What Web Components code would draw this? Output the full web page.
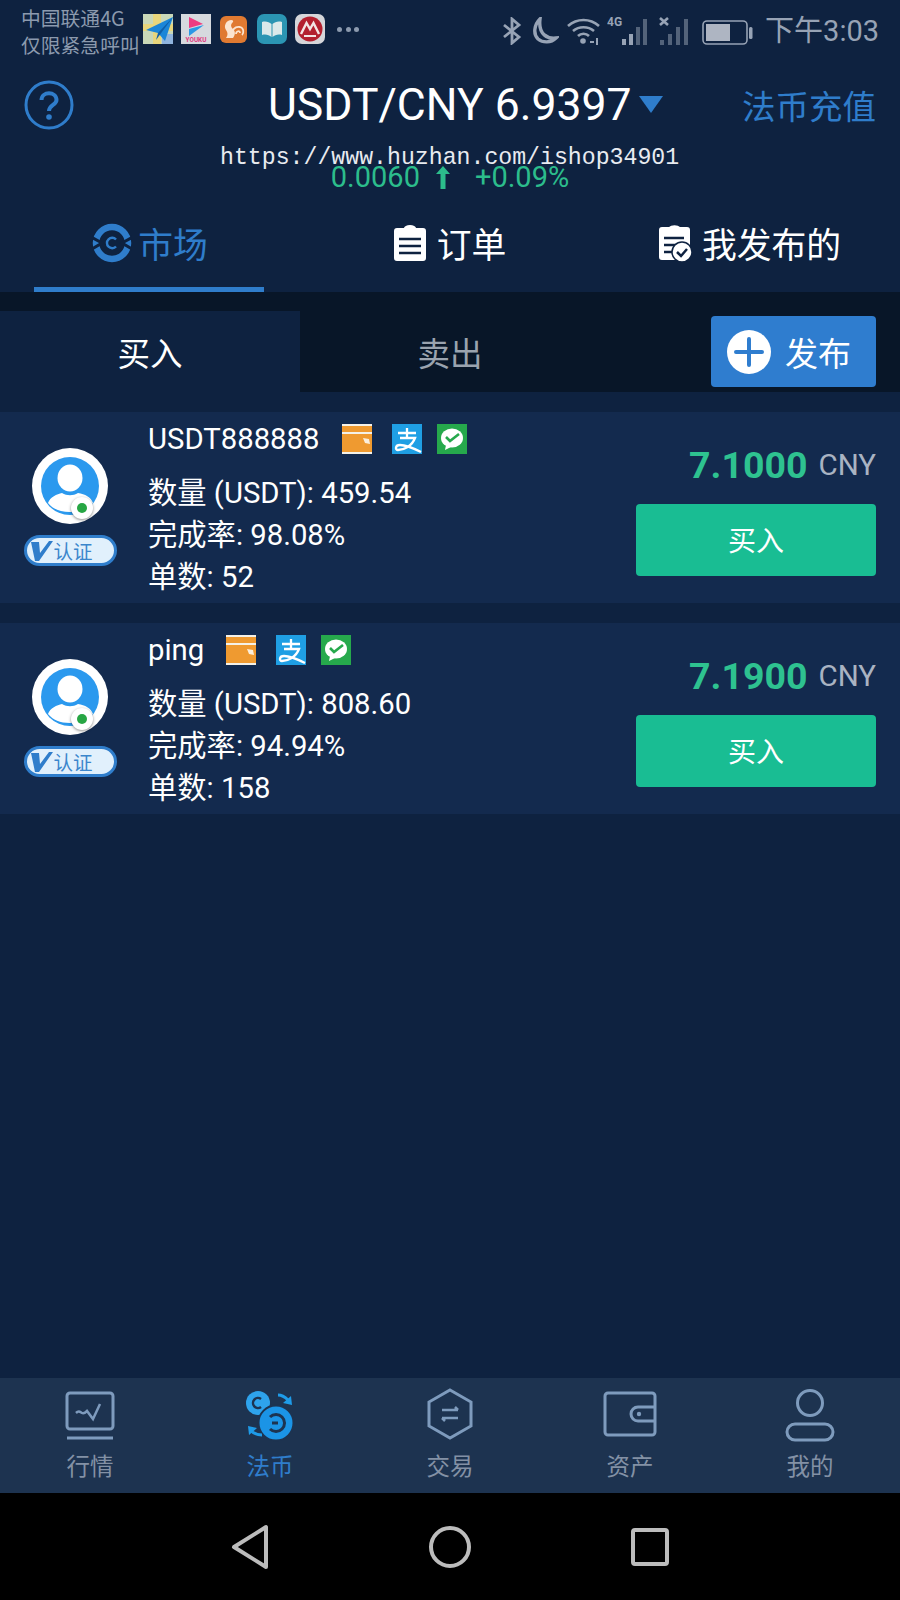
<!DOCTYPE html>
<html lang="zh">
<head>
<meta charset="utf-8">
<title>USDT/CNY</title>
<style>
  html, body { margin: 0; padding: 0; background: #0e2240; }
  body { font-family: Roboto, "Noto Sans CJK SC", sans-serif; }
</style>
</head>
<body>
<app-shell>
  <status-bar></status-bar>
  <rate-header></rate-header>
  <market-tabs></market-tabs>
  <side-switch></side-switch>
  <ad-list>
    <ad-card name="USDT888888" qty="459.54" rate="98.08%" count="52" price="7.1000"></ad-card>
    <ad-card name="ping" qty="808.60" rate="94.94%" count="158" price="7.1900"></ad-card>
  </ad-list>
  <bottom-nav></bottom-nav>
  <system-nav></system-nav>
</app-shell>

<script>
const FONT = 'Roboto, "Noto Sans CJK SC", sans-serif';
const CJK = '"Noto Sans CJK SC", Roboto, sans-serif';

// Contenidor de tota la pantalla
class AppShell extends HTMLElement {
  constructor() {
    super();
    this.attachShadow({ mode: 'open' });
  }
  connectedCallback() {
    this.shadowRoot.innerHTML = `
      <style>
        :host { display: flex; flex-direction: column; width: 900px; height: 1600px; background: #0e2240; color: #fff; font-family: ${FONT}; overflow: hidden; }
      </style>
      <slot></slot>`;
  }
}

// Barra d'estat del telefon
class StatusBar extends HTMLElement {
  constructor() {
    super();
    this.attachShadow({ mode: 'open' });
  }
  connectedCallback() {
    this.shadowRoot.innerHTML = `
      <style>
        :host { display: flex; align-items: flex-start; height: 55px; padding: 4px 21px 0; box-sizing: border-box; color: #8c9aae; font-family: ${CJK}; }
        .carrier { width: 122px; font-size: 19.800px; line-height: 27px; white-space: nowrap; }
        .apps { display: flex; align-items: center; margin-top: 10px; }
        .apps svg { display: block; width: 30px; height: 30px; margin-right: 8px; }
        .dots { display: flex; gap: 3.500px; margin-left: 4px; }
        .dots i { width: 5px; height: 5px; border-radius: 50%; background: #8c9aae; }
        .right { margin-left: auto; display: flex; align-items: center; margin-top: 12px; color: #97a3b5; }
        .right svg { display: block; }
        .time { font-size: 29px; line-height: 30px; margin-left: 11px; font-family: Roboto, "Noto Sans CJK SC", sans-serif; white-space: nowrap; }
      </style>
      <div class="carrier">中国联通4G<br>仅限紧急呼叫</div>
      <div class="apps">
        <svg viewBox="0 0 30 30"><rect width="30" height="30" fill="#c9d8b8"/><rect x="10" width="8" height="30" fill="#e8d67c"/><rect y="10" width="30" height="7" fill="#e8d67c"/><rect x="19" y="20" width="11" height="10" fill="#8fb4de"/><path d="M3 16 30 3 22 27 15 19Z" fill="#1b86d8"/><path d="M15 19 30 3 13 26Z" fill="#0f5fa8"/></svg>
        <svg viewBox="0 0 30 30"><rect width="30" height="30" fill="#d6d9de"/><path d="M8 3 22 10 8 14Z" fill="#ee3c82"/><path d="M23 11 8 15V22Z" fill="#2a98e6"/><text x="15" y="28" text-anchor="middle" font-size="6.4" font-weight="700" fill="#e0397f" font-family="Roboto, sans-serif">YOUKU</text></svg>
        <svg viewBox="0 0 30 30"><rect x="1" y="2" width="27" height="27" rx="6" fill="#e07a31"/><path d="M9 7c3-2 6-1 5 1-2 2-3 4 0 7 3 3 2 6 0 9H7c2-3 2-5 0-8-2-3-1-7 2-9Z" fill="#fbe4cf"/><path d="M14 22c-2-6 2-10 7-9 4 1 4 6 2 8M17 20c0-3 4-4 4-1" fill="none" stroke="#fbe4cf" stroke-width="1.800"/></svg>
        <svg viewBox="0 0 30 30"><rect width="30" height="30" rx="7" fill="#2b95b3"/><path d="M5 8c4-1 7 0 9.500 2v13C12 21 9 20 5 21Z" fill="#dbe9ea"/><path d="M25 8c-4-1-7 0-9.500 2v13c2.500-2 5.500-3 9.500-2Z" fill="#dbe9ea"/></svg>
        <svg viewBox="0 0 30 30" style="margin-right:8px"><rect width="30" height="30" rx="7" fill="#d5d6da"/><circle cx="15" cy="15" r="12.500" fill="#b3202f"/><path d="M6 20 11.500 9 15 15 18.500 9 24 20" fill="none" stroke="#f3e5e5" stroke-width="2.400"/><path d="M9 22H21" stroke="#f3e5e5" stroke-width="2"/></svg>
        <div class="dots"><i></i><i></i><i></i></div>
      </div>
      <div class="right">
        <svg width="20" height="28" viewBox="0 0 20 28" fill="none" stroke="currentColor" stroke-width="2.800"><path d="M2 8 17 20 10 26V2L17 8 2 20"/></svg>
        <svg width="30" height="28" viewBox="0 0 30 28" style="margin-left:7px" fill="none" stroke="currentColor" stroke-width="3.400"><path d="M11 2C5 8 4 17 9 22c5 4 13 4 18-1-8 1-18-3-16-19Z"/></svg>
        <svg width="34" height="28" viewBox="0 0 34 28" style="margin-left:8px" fill="none" stroke="currentColor" stroke-width="2.600"><path d="M1 9c9-8 22-8 31 0M6 14c6-5 15-5 21 0M11 19c3-3 8-3 11 0"/><circle cx="16" cy="24" r="2.800" fill="currentColor" stroke="none"/><path d="M23 25h4M30 21v7" stroke-width="2"/></svg>
        <svg width="44" height="30" viewBox="0 0 44 30" style="margin-left:6px"><text x="0" y="10" font-size="12" font-weight="700" fill="currentColor" font-family="Roboto, sans-serif">4G</text><g fill="currentColor"><rect x="15" y="23" width="4" height="6"/><rect x="22" y="18" width="4" height="11"/></g><g fill="currentColor" opacity=".5"><rect x="29" y="11" width="4" height="18"/><rect x="36" y="3" width="4" height="26"/></g></svg>
        <svg width="32" height="30" viewBox="0 0 32 30" style="margin-left:8px"><path d="M1 2 9 9M9 2 1 9" stroke="currentColor" stroke-width="2.600"/><g fill="currentColor" opacity=".5"><rect x="1" y="24" width="4" height="5"/><rect x="9" y="18" width="4" height="11"/><rect x="17" y="11" width="4" height="18"/><rect x="25" y="3" width="4" height="26"/></g></svg>
        <svg width="52" height="28" viewBox="0 0 52 28" style="margin-left:11px"><rect x="1" y="4" width="44" height="23" rx="4" fill="none" stroke="currentColor" stroke-width="1.600"/><rect x="4" y="7" width="24" height="17" fill="#aeb5c2"/><rect x="47" y="10" width="3.500" height="12" rx="1.500" fill="currentColor"/></svg>
        <div class="time">下午3:03</div>
      </div>`;
  }
}

// Capcalera amb el canvi USDT/CNY
class RateHeader extends HTMLElement {
  constructor() {
    super();
    this.attachShadow({ mode: 'open' });
  }
  connectedCallback() {
    this.shadowRoot.innerHTML = `
      <style>
        :host { display: block; position: relative; height: 140px; box-sizing: border-box; }
        .top { display: grid; grid-template-columns: 244px auto 1fr; align-items: center; height: 96px; padding: 4px 24px 0; box-sizing: border-box; }
        .help { display: block; }
        .title { display: flex; align-items: center; font-size: 44.500px; line-height: 92px; white-space: nowrap; }
        .title i { width: 0; height: 0; margin: 0 0 2px 8px; border-left: 12px solid transparent; border-right: 12px solid transparent; border-top: 17px solid #2f7dcb; }
        .recharge { justify-self: end; color: #2f7dcb; font-size: 33.500px; font-family: ${CJK}; line-height: 44px; white-space: nowrap; }
        .change { display: flex; justify-content: center; align-items: center; margin-top: 6px; color: #2cbd8c; font-size: 29px; line-height: 40px; }
        .change svg { margin: 0 24px 0 15px; }
        .mark { position: absolute; left: 220px; top: 88px; font-family: "Liberation Mono", monospace; font-size: 23.200px; line-height: 30px; color: #e8ebf0; white-space: nowrap; }
      </style>
      <div class="top">
        <svg class="help" width="50" height="50" viewBox="0 0 50 50" fill="none" stroke="#2f7dcb" stroke-width="3"><circle cx="25" cy="25" r="23"/><path d="M17.500 20c0-9 15-9 15 0 0 5-7.500 5-7.500 11" stroke-width="4"/><circle cx="25" cy="37" r="2.800" fill="#2f7dcb" stroke="none"/></svg>
        <div class="title">USDT/CNY 6.9397<i></i></div>
        <div class="recharge">法币充值</div>
      </div>
      <div class="change">0.0060<svg width="16" height="24" viewBox="0 0 16 24" fill="#2cbd8c"><path d="M8 1 15 9H10.500V24H5.500V9H1Z"/></svg>+0.09%</div>
      <div class="mark">https://www.huzhan.com/ishop34901</div>`;
  }
}

// Pestanyes principals: mercat, comandes, publicats
class MarketTabs extends HTMLElement {
  constructor() {
    super();
    this.attachShadow({ mode: 'open' });
  }
  connectedCallback() {
    this.shadowRoot.innerHTML = `
      <style>
        :host { display: grid; grid-template-columns: repeat(3, 1fr); height: 97px; font-family: ${CJK}; font-size: 34.800px; }
        .tab { position: relative; display: flex; align-items: center; justify-content: center; gap: 6px; padding-bottom: 2px; box-sizing: border-box; white-space: nowrap; }
        .tab svg { display: block; }
        .on { color: #2f7dcb; }
        .on::after { content: ""; position: absolute; left: 34px; width: 230px; bottom: 0; height: 5px; background: #2f7dcb; }
      </style>
      <div class="tab on">
        <svg width="40" height="40" viewBox="0 0 40 40" fill="none"><circle cx="20" cy="20" r="16" stroke="#2f7dcb" stroke-width="6.500"/><path d="M-1 14 10 20 0 26M41 14 30 20 40 26" stroke="#0e2240" stroke-width="3"/><circle cx="20" cy="20" r="9.500" stroke="#0e2240" stroke-width="1"/><path d="M24 16.500a5.200 5.200 0 1 0 0 7" stroke="#2f7dcb" stroke-width="2.400"/></svg>
        市场
      </div>
      <div class="tab">
        <svg width="32" height="36" viewBox="0 0 32 36"><path d="M3 3H10a6 3 0 0 1 12 0H29a3 3 0 0 1 3 3V33a3 3 0 0 1-3 3H3a3 3 0 0 1-3-3V6a3 3 0 0 1 3-3Z" fill="#fff"/><path d="M5 14H27M5 21H27M5 28H27" stroke="#0e2240" stroke-width="2.500"/></svg>
        <span style="margin-left:5px">订单</span>
      </div>
      <div class="tab" style="gap:10px">
        <svg width="33" height="38" viewBox="0 0 33 38"><path d="M3 3H10a6 3 0 0 1 11 0H28a3 3 0 0 1 3 3V33a3 3 0 0 1-3 3H3a3 3 0 0 1-3-3V6a3 3 0 0 1 3-3Z" fill="#fff"/><path d="M5 14H25M5 21H20M5 28H14" stroke="#0e2240" stroke-width="2.500"/><circle cx="23" cy="28" r="10" fill="#fff" stroke="#0e2240" stroke-width="1.500"/><path d="M18 28 22 32 28 25" fill="none" stroke="#0e2240" stroke-width="2.500"/></svg>
        我发布的
      </div>`;
  }
}

// Selector comprar / vendre amb el boto de publicar
class SideSwitch extends HTMLElement {
  constructor() {
    super();
    this.attachShadow({ mode: 'open' });
  }
  connectedCallback() {
    this.shadowRoot.innerHTML = `
      <style>
        :host { display: flex; height: 100px; padding-top: 19px; box-sizing: border-box; background: #081628; font-family: ${CJK}; font-size: 32.500px; }
        .side { display: flex; align-items: center; justify-content: center; width: 300px; color: #9aa3af; }
        .on { background: #0e2240; color: #fff; }
        .post { display: flex; align-items: center; gap: 14px; width: 165px; height: 71px; margin: 5px 24px 0 auto; padding-left: 16px; box-sizing: border-box; background: #2f7dcf; border-radius: 4px; color: #fff; font-size: 33px; }
        .post svg { display: block; }
      </style>
      <div class="side on">买入</div>
      <div class="side">卖出</div>
      <div class="post">
        <svg width="44" height="44" viewBox="0 0 44 44"><circle cx="22" cy="22" r="22" fill="#fff"/><path d="M22 9V35M9 22H35" stroke="#2f7dcf" stroke-width="4" stroke-linecap="round"/></svg>
        发布
      </div>`;
  }
}

// Llista d'anuncis
class AdList extends HTMLElement {
  constructor() {
    super();
    this.attachShadow({ mode: 'open' });
  }
  connectedCallback() {
    this.shadowRoot.innerHTML = `
      <style>
        :host { display: flex; flex-direction: column; flex: 1; gap: 20px; padding-top: 20px; box-sizing: border-box; background: #0e2240; }
      </style>
      <slot></slot>`;
  }
}

// Un anunci: avatar, dades del venedor, preu i boto
class AdCard extends HTMLElement {
  constructor() {
    super();
    this.attachShadow({ mode: 'open' });
  }
  connectedCallback() {
    const name = this.getAttribute('name');
    const qty = this.getAttribute('qty');
    const rate = this.getAttribute('rate');
    const count = this.getAttribute('count');
    const price = this.getAttribute('price');
    this.shadowRoot.innerHTML = `
      <style>
        :host { display: flex; height: 191px; box-sizing: border-box; background: #132a4e; color: #fff; font-family: ${FONT}; }
        .who { display: flex; flex-direction: column; align-items: center; gap: 11px; width: 148px; padding: 36px 8px 0 0; box-sizing: border-box; }
        .avatar { position: relative; width: 76px; height: 76px; border-radius: 50%; background: #fff; }
        .avatar svg.face { display: block; position: absolute; left: 9px; top: 9px; }
        .dot { position: absolute; left: 39px; top: 49px; width: 22px; height: 22px; border-radius: 50%; background: #fff; box-shadow: 0 1px 3px rgba(0,0,0,.45); display: flex; align-items: center; justify-content: center; }
        .dot i { width: 10px; height: 10px; border-radius: 50%; background: #27a644; }
        .badge { display: flex; align-items: center; width: 93px; height: 31px; padding-left: 4px; box-sizing: border-box; border: 3px solid #2f7dcb; border-radius: 16px; background: #e1f0fc; color: #3b86cc; font-family: ${CJK}; font-size: 19.500px; line-height: 25px; white-space: nowrap; }
        .badge svg { display: block; margin-right: 1px; }
        .info { flex: 1; padding-top: 5px; font-size: 29.300px; }
        .name { display: flex; align-items: center; height: 44px; margin-bottom: 11px; line-height: 46px; }
        .pay { display: block; margin-left: 20px; }
        .pay.first { margin-left: 22px; }
        .pay.last { margin-left: 15px; }
        .row { height: 42px; line-height: 42px; white-space: nowrap; font-family: Roboto, "Noto Sans CJK SC", sans-serif; }
        .side { display: flex; flex-direction: column; align-items: flex-end; padding: 31px 24px 0 0; }
        .price { display: flex; align-items: center; gap: 11px; height: 44px; margin-bottom: 17px; line-height: 44px; color: #2ec290; font-size: 37.500px; font-weight: 700; white-space: nowrap; }
        .price span { color: #a9b3c2; font-size: 29.500px; font-weight: 400; }
        .buy { display: flex; align-items: center; justify-content: center; width: 240px; height: 72px; padding-bottom: 3px; box-sizing: border-box; border-radius: 4px; background: #19bd93; font-family: ${CJK}; font-size: 28px; }
      </style>
      <div class="who">
        <div class="avatar">
          <svg class="face" width="58" height="58" viewBox="0 0 58 58"><circle cx="29" cy="29" r="29" fill="#2b99ee"/><ellipse cx="29" cy="21" rx="12.500" ry="13.500" fill="#fff"/><path d="M7 46c2-6 9-9 14-10 5 3 11 3 16 0 7 1 13 4 15 10-5 6-13 9-23 9S12 52 7 46Z" fill="#fff"/></svg>
          <div class="dot"><i></i></div>
        </div>
        <div class="badge">
          <svg width="22" height="20" viewBox="0 0 22 20"><path d="M0 1H8L9 12 18 0H22L8 20H4Z" fill="#2f7dcb"/></svg>
          认证
        </div>
      </div>
      <div class="info">
        <div class="name">
          <span>${name}</span>
          <svg class="pay first" width="30" height="30" viewBox="0 0 30 30"><rect width="30" height="30" fill="#f4f1e8"/><rect y="2" width="30" height="6" fill="#ef9a30"/><rect y="10" width="30" height="18" fill="#ef9a30"/><path d="M21 14 27 15 28 20 23 19Z" fill="#fbeedb"/></svg>
          <svg class="pay" width="30" height="30" viewBox="0 0 30 30"><rect width="30" height="30" fill="#1f9fe4"/><path d="M6 9H24M15 4V13M8 14H23C20 22 12 26 6 26c-3 0-3-5 2-5 6 0 13 3 21 7" fill="none" stroke="#fff" stroke-width="2.300"/></svg>
          <svg class="pay last" width="30" height="30" viewBox="0 0 30 30"><rect width="30" height="30" fill="#26a94c"/><ellipse cx="15" cy="14" rx="11" ry="9.500" fill="#fff"/><path d="M9 21 8 26 14 23Z" fill="#fff"/><path d="M9 13 13 17 22 10" fill="none" stroke="#26a94c" stroke-width="2.600"/></svg>
        </div>
        <div class="row">数量 (USDT): ${qty}</div>
        <div class="row">完成率: ${rate}</div>
        <div class="row">单数: ${count}</div>
      </div>
      <div class="side">
        <div class="price">${price}<span>CNY</span></div>
        <div class="buy">买入</div>
      </div>`;
  }
}

// Navegacio inferior
class BottomNav extends HTMLElement {
  constructor() {
    super();
    this.attachShadow({ mode: 'open' });
  }
  connectedCallback() {
    const tabs = [
      { label: '行情', icon: '<rect x="21" y="4" width="46" height="36" rx="3"/><path d="M21 49H67" /><path d="M30 24c3-3 4-1 6 0s4-1 5-2l6 8 7-15" stroke-width="2.500"/>' },
      { label: '法币', on: true, icon: '<circle cx="32" cy="14" r="12" fill="#2ea3ec" stroke="none"/><path d="M35 10a5 5 0 1 0 0 8" stroke="#1d3350" stroke-width="2.500"/><circle cx="50" cy="34" r="17.500" fill="#1b94e6" stroke="#1d3350" stroke-width="2"/><path d="M44 28a8.500 8.500 0 1 1 0 12M46 34H52" stroke="#1d3350" stroke-width="3"/><path d="M52 6c4 0 7 2 10 5M36 46c-5 0-9-2-12-5" stroke="#1e9be8" stroke-width="3"/><path d="M66 16 65 7 57 14ZM22 37 23 46 31 39Z" fill="#1e9be8" stroke="none"/>' },
      { label: '交易', icon: '<path d="M44 1 65 13V37L44 49 23 37V13Z"/><path d="M36 21H52M49 18 52 21M36 29H52M39 32 36 29" stroke-width="2.500"/>' },
      { label: '资产', icon: '<rect x="19" y="4" width="50" height="42" rx="3"/><path d="M69 18H52a7 7 0 0 0 0 14H69"/><circle cx="53" cy="25" r="2.200" fill="#7e9bbd" stroke="none"/>' },
      { label: '我的', icon: '<circle cx="44" cy="14" r="12.500"/><rect x="21" y="35" width="46" height="16" rx="8"/>' }
    ];
    const items = tabs.map(tab => `
      <div class="item ${tab.on ? 'on' : ''}">
        <svg width="88" height="52" viewBox="0 0 88 52" fill="none" stroke="#7e9bbd" stroke-width="3">${tab.icon}</svg>
        <span>${tab.label}</span>
      </div>`).join('');
    this.shadowRoot.innerHTML = `
      <style>
        :host { display: grid; grid-template-columns: repeat(5, 1fr); height: 115px; background: #1d3350; font-family: ${CJK}; }
        .item { display: flex; flex-direction: column; align-items: center; padding-top: 11px; box-sizing: border-box; color: #8391a5; font-size: 23.500px; }
        .item svg { display: block; overflow: visible; }
        .item span { line-height: 34px; margin-top: 7px; }
        .on { color: #2f7dcb; }
      </style>
      ${items}`;
  }
}

// Botons del sistema
class SystemNav extends HTMLElement {
  constructor() {
    super();
    this.attachShadow({ mode: 'open' });
  }
  connectedCallback() {
    this.shadowRoot.innerHTML = `
      <style>
        :host { display: grid; grid-template-columns: 180px 180px 180px; justify-content: center; align-items: center; height: 107px; background: #000; }
        svg { display: block; justify-self: center; }
      </style>
      <svg width="44" height="48" viewBox="0 0 44 48" style="transform:translateX(-20px)" fill="none" stroke="#bcbcbc" stroke-width="4"><path d="M6 24 38 4V44Z" stroke-linejoin="round"/></svg>
      <svg width="44" height="44" viewBox="0 0 44 44" fill="none" stroke="#bcbcbc" stroke-width="4"><circle cx="22" cy="22" r="19"/></svg>
      <svg width="40" height="40" viewBox="0 0 40 40" style="transform:translateX(20px)" fill="none" stroke="#bcbcbc" stroke-width="4"><rect x="3" y="3" width="34" height="34" rx="2"/></svg>`;
  }
}

customElements.define('app-shell', AppShell);
customElements.define('status-bar', StatusBar);
customElements.define('rate-header', RateHeader);
customElements.define('market-tabs', MarketTabs);
customElements.define('side-switch', SideSwitch);
customElements.define('ad-list', AdList);
customElements.define('ad-card', AdCard);
customElements.define('bottom-nav', BottomNav);
customElements.define('system-nav', SystemNav);
</script>
</body>
</html>
